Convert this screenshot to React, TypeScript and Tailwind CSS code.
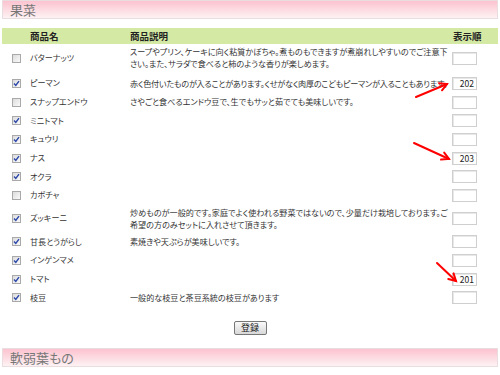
import React from 'react'

type Item = {
  name: string
  desc?: string[]
  checked: boolean
  order?: string
  tight?: boolean
}

const items: Item[] = [
  {
    name: 'バターナッツ',
    desc: [
      'スープやプリン、ケーキに向く粘質かぼちゃ。煮ものもできますが煮崩れしやすいのでご注意下',
      'さい。また、サラダで食べると柿のような香りが楽しめます。',
    ],
    checked: false,
  },
  {
    name: 'ピーマン',
    desc: ['赤く色付いたものが入ることがあります。くせがなく肉厚のこどもピーマンが入ることもあります。'],
    checked: true,
    order: '202',
    tight: true,
  },
  {
    name: 'スナップエンドウ',
    desc: ['さやごと食べるエンドウ豆で、生でもサッと茹でても美味しいです。'],
    checked: false,
  },
  { name: 'ミニトマト', checked: true },
  { name: 'キュウリ', checked: true },
  { name: 'ナス', checked: true, order: '203' },
  { name: 'オクラ', checked: true },
  { name: 'カボチャ', checked: false },
  {
    name: 'ズッキーニ',
    desc: [
      '炒めものが一般的です。家庭でよく使われる野菜ではないので、少量だけ栽培しております。ご',
      '希望の方のみセットに入れさせて頂きます。',
    ],
    checked: true,
  },
  { name: '甘長とうがらし', desc: ['素焼きや天ぷらが美味しいです。'], checked: true },
  { name: 'インゲンマメ', checked: true },
  { name: 'トマト', checked: true, order: '201' },
  { name: '枝豆', desc: ['一般的な枝豆と茶豆系統の枝豆があります'], checked: true },
]

function Checkbox({ checked }: { checked: boolean }) {
  return (
    <span className="flex h-[9px] w-[9px] items-center justify-center border border-[#a9a9a9] bg-gradient-to-br from-[#dcdcdc] to-[#fafafa]">
      {checked && (
        <svg width="7" height="7" viewBox="0 0 7 7">
          <path d="M1 3.6 L2.8 5.5 L6 1.2" fill="none" stroke="#2b47a8" strokeWidth="1.4" />
        </svg>
      )}
    </span>
  )
}

function SectionBar({ title }: { title: string }) {
  return (
    <div className="mx-[2px] flex h-[19px] items-center border border-[#eadde0] bg-gradient-to-b from-[#fbc3cf] to-[#fdf2f4] pl-[7px] text-[13px] text-[#777]">
      {title}
    </div>
  )
}

function Arrow({ x1, y1, x2, y2 }: { x1: number; y1: number; x2: number; y2: number }) {
  const a = Math.atan2(y2 - y1, x2 - x1)
  const l = 8
  const h1 = [x2 - l * Math.cos(a - 0.5), y2 - l * Math.sin(a - 0.5)]
  const h2 = [x2 - l * Math.cos(a + 0.5), y2 - l * Math.sin(a + 0.5)]
  return (
    <g stroke="#ff0000" strokeWidth="2" strokeLinecap="round" fill="none">
      <line x1={x1} y1={y1} x2={x2} y2={y2} />
      <polyline points={`${h1[0]},${h1[1]} ${x2},${y2} ${h2[0]},${h2[1]}`} />
    </g>
  )
}

export default function App() {
  return (
    <div
      className="relative h-[375px] w-[500px] overflow-hidden bg-white text-[#333]"
      style={{ fontFamily: '"Noto Sans CJK JP", "Noto Sans", sans-serif', fontFeatureSettings: '"palt"' }}
    >
      <SectionBar title="果菜" />

      <div className="mx-[2px] mt-[9px]">
        <div className="grid h-[16px] grid-cols-[28px_100px_322px_1fr] items-center bg-[#d3e9a4] text-[9.5px] font-bold text-[#222]">
          <span />
          <span>商品名</span>
          <span>商品説明</span>
          <span className="pl-[1px]">表示順</span>
        </div>

        {items.map((it, i) => (
          <div
            key={it.name}
            className={
              i === 1
                ? 'grid min-h-[21px] grid-cols-[28px_100px_322px_1fr] items-center pt-[3px] pb-[1px] text-[8.1px]'
                : 'grid min-h-[18.6px] grid-cols-[28px_100px_322px_1fr] items-center py-[2px] text-[8.1px]'
            }
          >
            <span className="pl-[10px]">
              <Checkbox checked={it.checked} />
            </span>
            <span className="whitespace-nowrap">{it.name}</span>
            <span className={it.tight ? 'leading-[12px] tracking-[-0.22px]' : 'leading-[12px]'}>
              {it.desc?.map((line) => (
                <span key={line} className="block whitespace-nowrap">
                  {line}
                </span>
              ))}
            </span>
            <span>
              <span className="flex h-[13px] w-[25px] items-center justify-end border border-[#cfcfcf] bg-white pr-[2px] text-[8.5px] text-[#222] shadow-[inset_1px_1px_0_#e8e8e8]">
                {it.order}
              </span>
            </span>
          </div>
        ))}

        <div className="flex justify-center pt-[14px]">
          <button className="flex h-[14px] w-[33px] items-center justify-center rounded-[2px] border border-[#777] bg-gradient-to-b from-[#fafafa] to-[#d8d8d8] text-[9px] text-[#222]">
            登録
          </button>
        </div>
      </div>

      <div className="mt-[13px]">
        <SectionBar title="軟弱葉もの" />
      </div>
      <div className="mx-[2px] mt-[8px] h-[4px] bg-[#d3e9a4]" />

      <svg className="pointer-events-none absolute left-0 top-0" width="500" height="375">
        <Arrow x1={416} y1={97} x2={447} y2={84} />
        <Arrow x1={414} y1={143} x2={449} y2={159} />
        <Arrow x1={437} y1={263} x2={456} y2={281} />
      </svg>
    </div>
  )
}
